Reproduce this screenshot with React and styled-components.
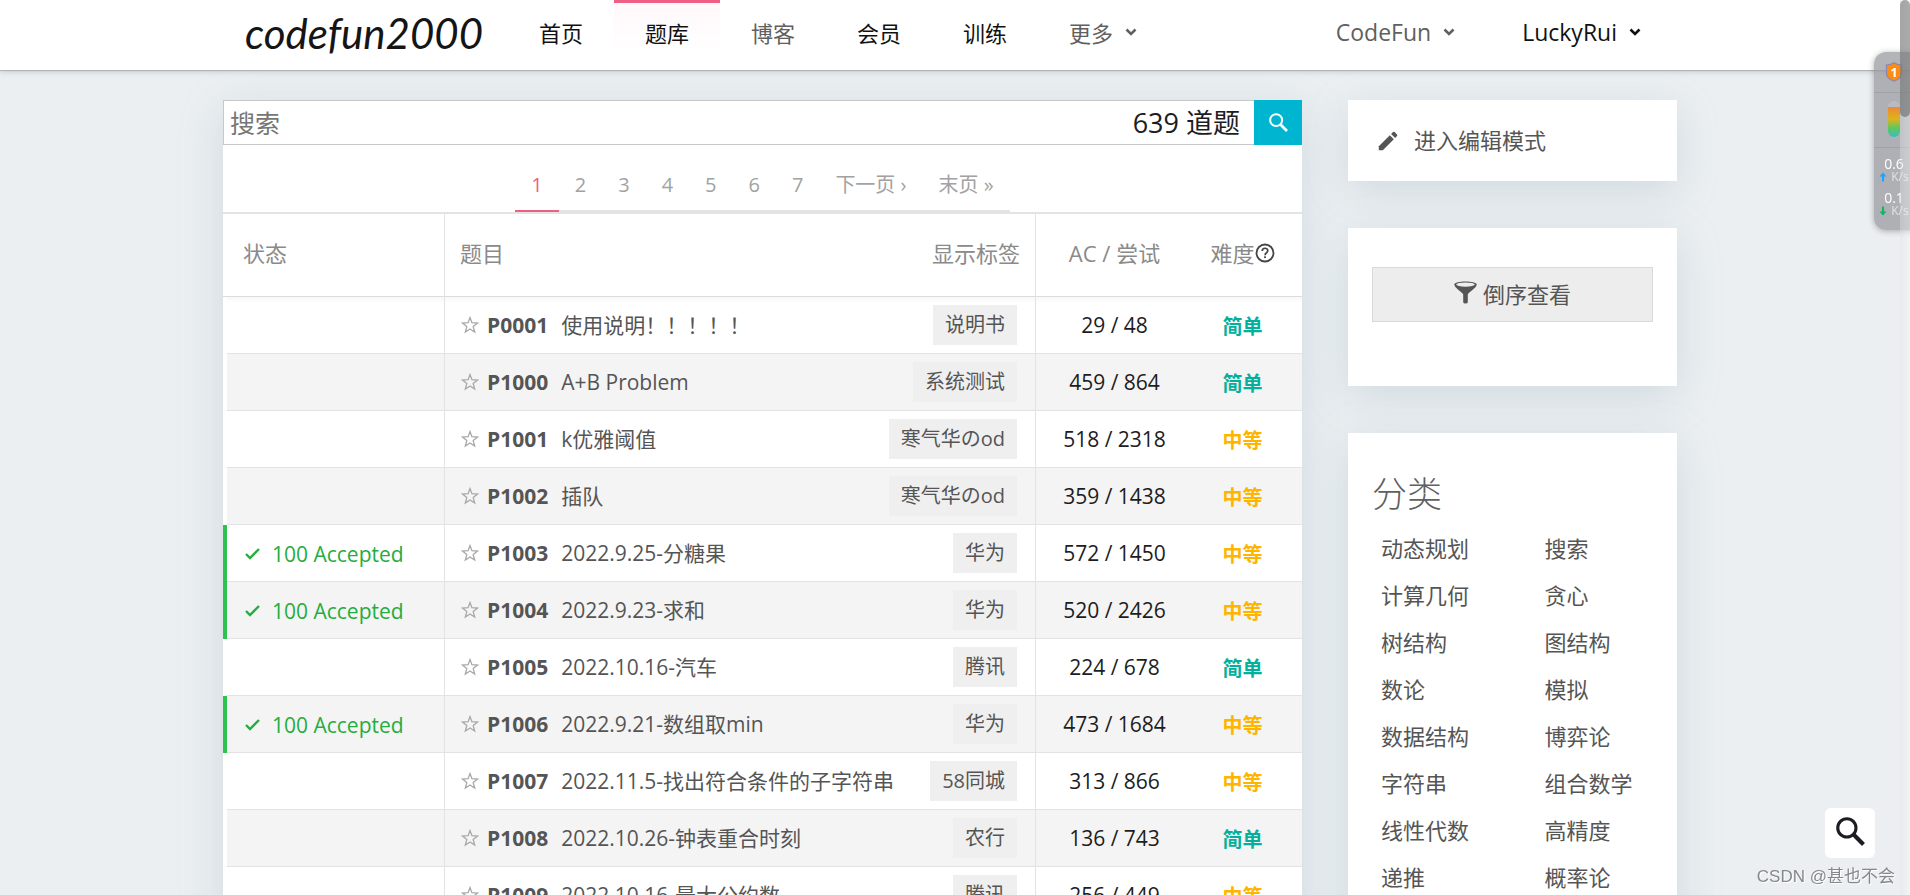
import React, { useState } from "react";
import styled, { createGlobalStyle } from "styled-components";

const problems = [
  { id: "P0001", title: "使用说明！！！！！", tag: "说明书", ac: 29, tries: 48, level: "简单" },
  { id: "P1000", title: "A+B Problem", tag: "系统测试", ac: 459, tries: 864, level: "简单" },
  { id: "P1001", title: "k优雅阈值", tag: "寒气华のod", ac: 518, tries: 2318, level: "中等" },
  { id: "P1002", title: "插队", tag: "寒气华のod", ac: 359, tries: 1438, level: "中等" },
  { id: "P1003", title: "2022.9.25-分糖果", tag: "华为", ac: 572, tries: 1450, level: "中等", accepted: true },
  { id: "P1004", title: "2022.9.23-求和", tag: "华为", ac: 520, tries: 2426, level: "中等", accepted: true },
  { id: "P1005", title: "2022.10.16-汽车", tag: "腾讯", ac: 224, tries: 678, level: "简单" },
  { id: "P1006", title: "2022.9.21-数组取min", tag: "华为", ac: 473, tries: 1684, level: "中等", accepted: true },
  { id: "P1007", title: "2022.11.5-找出符合条件的子字符串", tag: "58同城", ac: 313, tries: 866, level: "中等" },
  { id: "P1008", title: "2022.10.26-钟表重合时刻", tag: "农行", ac: 136, tries: 743, level: "简单" },
  { id: "P1009", title: "2022.10.16-最大公约数", tag: "腾讯", ac: 256, tries: 449, level: "中等" },
];

const categories = [
  "动态规划", "搜索",
  "计算几何", "贪心",
  "树结构", "图结构",
  "数论", "模拟",
  "数据结构", "博弈论",
  "字符串", "组合数学",
  "线性代数", "高精度",
  "递推", "概率论",
];

const navItems = [
  { name: "首页" },
  { name: "题库", active: true },
  { name: "博客", muted: true },
  { name: "会员" },
  { name: "训练" },
];

const ChevronIcon = () => (
  <svg width="12" height="8" viewBox="0 0 12 8" aria-hidden="true">
    <path d="M1.5 1.5 L6 6 L10.5 1.5" fill="none" stroke="currentColor" strokeWidth="2.6" />
  </svg>
);

const SearchIcon = ({ size }) => (
  <svg width={size} height={size} viewBox="0 0 28 28" aria-hidden="true">
    <circle cx="10.5" cy="10.5" r="8.8" fill="none" stroke="currentColor" strokeWidth="3" />
    <path d="M16.5 16.5 L26.5 26.5" stroke="currentColor" strokeWidth="4" />
  </svg>
);

const StarIcon = () => (
  <svg width="18" height="18" viewBox="0 0 18 18" aria-hidden="true">
    <path
      d="M9 1.6 L10.9 6.7 L16.6 7 L12.2 10.6 L13.7 16 L9 13 L4.3 16 L5.8 10.6 L1.4 7 L7.1 6.7 Z"
      fill="none"
      stroke="currentColor"
      strokeWidth="1.3"
    />
  </svg>
);

const CheckIcon = () => (
  <svg width="15" height="12" viewBox="0 0 15 12" aria-hidden="true">
    <path d="M1 6 L5 10 L14 1" fill="none" stroke="currentColor" strokeWidth="2.4" />
  </svg>
);

const HelpIcon = () => (
  <svg width="20" height="20" viewBox="0 0 20 20" aria-hidden="true">
    <circle cx="10" cy="10" r="8.5" fill="none" stroke="currentColor" strokeWidth="1.8" />
    <path
      d="M7.2 8 C7.2 4.4 12.8 4.4 12.8 7.8 C12.8 9.8 10 9.8 10 12.2"
      fill="none"
      stroke="currentColor"
      strokeWidth="1.7"
    />
    <rect x="9.1" y="13.3" width="1.8" height="1.8" fill="currentColor" />
  </svg>
);

const PencilIcon = () => (
  <svg width="20" height="20" viewBox="0 0 20 20" fill="currentColor" aria-hidden="true">
    <path d="M0.8 15.2 L11.8 4.2 L15.8 8.2 L4.8 19.2 H0.8 Z" />
    <path d="M13.1 2.9 L15 1 Q15.8 0.4 16.6 1 L19 3.4 Q19.6 4.2 19 5 L17.1 6.9 Z" />
  </svg>
);

const FunnelIcon = () => (
  <svg width="23" height="23" viewBox="0 0 23 23" aria-hidden="true">
    <path d="M0.3 3.6 C0.3 7 8.6 11.4 9.2 13.4 V21 Q9.2 22.6 11.5 22.6 Q13.8 22.6 13.8 21 V13.4 C14.4 11.4 22.7 7 22.7 3.6 C22.7 -0.5 0.3 -0.5 0.3 3.6 Z" fill="currentColor" />
    <ellipse cx="11.5" cy="3.6" rx="9.3" ry="2.1" fill="#ededed" />
  </svg>
);

const ShieldIcon = () => (
  <svg width="18" height="20" viewBox="0 0 18 20" aria-hidden="true">
    <path
      d="M9 0.8 Q12 3 16.6 3 V11 Q16.6 16.4 9 19.2 Q1.4 16.4 1.4 11 V3 Q6 3 9 0.8 Z"
      fill="#ff8c12"
      stroke="#8b86b4"
      strokeWidth="1.2"
    />
    <text x="9" y="14.5" textAnchor="middle" fontSize="13" fontWeight="bold" fill="#fff">1</text>
  </svg>
);

const ArrowIcon = ({ down }) => (
  <svg width="8" height="10" viewBox="0 0 8 10" aria-hidden="true">
    <path
      d={down ? "M4 9.5 L0.5 5.5 H3 V0.5 H5 V5.5 H7.5 Z" : "M4 0.5 L7.5 4.5 H5 V9.5 H3 V4.5 H0.5 Z"}
      fill={down ? "#08b95d" : "#18a4ff"}
    />
  </svg>
);

export default function App() {
  const [keyword, setKeyword] = useState("");
  const [starred, setStarred] = useState([]);

  const toggleStar = (id) => {
    setStarred((prev) => (prev.includes(id) ? prev.filter((item) => item !== id) : [...prev, id]));
  };

  const renderRows = () => {
    return problems.map((problem) => (
      <Row key={problem.id}>
        <StatusCell $accepted={problem.accepted}>
          {problem.accepted && (
            <StatusLink href="#record">
              <CheckIcon />
              100 Accepted
            </StatusLink>
          )}
        </StatusCell>
        <ProblemCell>
          <ProblemContent>
            <StarButton
              aria-label={`收藏 ${problem.id}`}
              $active={starred.includes(problem.id)}
              onClick={() => toggleStar(problem.id)}
            >
              <StarIcon />
            </StarButton>
            <ProblemLink href={`#${problem.id}`}>
              <ProblemId>{problem.id}</ProblemId>
              {problem.title}
            </ProblemLink>
            <Tag href="#tag">{problem.tag}</Tag>
          </ProblemContent>
        </ProblemCell>
        <CountCell>
          {problem.ac} / {problem.tries}
        </CountCell>
        <LevelCell $level={problem.level}>{problem.level}</LevelCell>
      </Row>
    ));
  };

  return (
    <Page>
      <GlobalStyle />
      <Nav>
        <NavInner>
          <Logo href="#home">codefun2000</Logo>
          {navItems.map((item) => (
            <NavLink key={item.name} href="#nav" $active={item.active} $muted={item.muted}>
              {item.name}
            </NavLink>
          ))}
          <NavMenu $muted>
            更多
            <ChevronIcon />
          </NavMenu>
          <UserMenus>
            <UserMenu $muted>
              CodeFun
              <ChevronIcon />
            </UserMenu>
            <UserMenu>
              LuckyRui
              <ChevronIcon />
            </UserMenu>
          </UserMenus>
        </NavInner>
      </Nav>

      <Container>
        <MainCard>
          <SearchForm onSubmit={(event) => event.preventDefault()}>
            <SearchField>
              <SearchInput
                aria-label="搜索"
                placeholder="搜索"
                value={keyword}
                onChange={(event) => setKeyword(event.target.value)}
              />
              <ProblemCount>639 道题</ProblemCount>
            </SearchField>
            <SearchButton aria-label="搜索题目">
              <SearchIcon size={19} />
            </SearchButton>
          </SearchForm>
          <Pager>
            <PageList>
              {[1, 2, 3, 4, 5, 6, 7].map((page) => (
                <PageLink key={page} href="#page" $active={page === 1}>
                  {page}
                </PageLink>
              ))}
              <PageLink href="#page">下一页 ›</PageLink>
              <PageLink href="#page">末页 »</PageLink>
            </PageList>
          </Pager>
          <Table>
            <colgroup>
              <StatusCol />
              <col />
              <CountCol />
              <LevelCol />
            </colgroup>
            <thead>
              <tr>
                <StatusHead>状态</StatusHead>
                <ProblemHead>
                  <HeadContent>
                    题目
                    <TagToggle>显示标签</TagToggle>
                  </HeadContent>
                </ProblemHead>
                <CountHead>AC / 尝试</CountHead>
                <LevelHead>
                  <LevelContent>
                    难度
                    <HelpLink href="#help" aria-label="难度说明">
                      <HelpIcon />
                    </HelpLink>
                  </LevelContent>
                </LevelHead>
              </tr>
            </thead>
            <tbody>{renderRows()}</tbody>
          </Table>
        </MainCard>

        <Sidebar>
          <EditCard>
            <EditLink href="#edit">
              <PencilIcon />
              进入编辑模式
            </EditLink>
          </EditCard>
          <SortCard>
            <SortButton>
              <FunnelIcon />
              倒序查看
            </SortButton>
          </SortCard>
          <CategoryCard>
            <CategoryTitle>分类</CategoryTitle>
            <CategoryList>
              {categories.map((name) => (
                <CategoryLink key={name} href="#category">
                  {name}
                </CategoryLink>
              ))}
            </CategoryList>
          </CategoryCard>
        </Sidebar>
      </Container>

      <FloatingSearch aria-label="快速搜索">
        <SearchIcon size={29} />
      </FloatingSearch>
      <Watermark>CSDN @甚也不会</Watermark>
      <Monitor>
        <ShieldIcon />
        <Divider />
        <Gauge />
        <Divider />
        <Speed>0.6</Speed>
        <SpeedUnit>
          <ArrowIcon />
          K/s
        </SpeedUnit>
        <Speed>0.1</Speed>
        <SpeedUnit>
          <ArrowIcon down />
          K/s
        </SpeedUnit>
      </Monitor>
      <ScrollTrack>
        <ScrollThumb />
      </ScrollTrack>
    </Page>
  );
}

const GlobalStyle = createGlobalStyle`
  * {
    box-sizing: border-box;
  }
  html {
    scrollbar-width: none;
  }
  body {
    margin: 0;
    background: #ebeff2;
    color: #1c1d22;
    font-family: "Open Sans", "Noto Sans CJK SC", sans-serif;
    font-size: 20px;
  }
  a {
    color: inherit;
    text-decoration: none;
  }
  button, input {
    font-family: inherit;
    border: none;
    background: none;
    padding: 0;
    color: inherit;
  }
  button {
    cursor: pointer;
  }
  svg {
    flex-shrink: 0;
  }
`;
const Page = styled.div`
  min-height: 100vh;
  padding-right: 10px;
`;
const Nav = styled.nav`
  position: relative;
  height: 70px;
  margin-right: -10px;
  padding-right: 10px;
  background: #fff;
  box-shadow: 0 1px 1px rgba(0, 0, 0, 0.16), 0 2px 6px rgba(0, 0, 0, 0.14);
`;
const NavInner = styled.div`
  display: flex;
  max-width: 1454px;
  height: 100%;
  margin: 0 auto;
`;
const Logo = styled.a`
  width: 285px;
  padding-left: 22px;
  color: #151515;
  font-family: Lato, sans-serif;
  font-size: 42px;
  font-style: italic;
  line-height: 66px;
`;
const NavLink = styled.a`
  padding: 0 31px;
  border-top: 3px solid ${(props) => (props.$active ? "#ef5f85" : "transparent")};
  background: ${(props) => (props.$active ? "linear-gradient(#fff8fa, #fff 50px)" : "none")};
  color: ${(props) => (props.$muted ? "#606060" : "#111")};
  font-size: 22px;
  line-height: 60px;
  white-space: nowrap;
`;
const NavMenu = styled.button`
  display: flex;
  align-items: center;
  gap: 12px;
  padding: 0 31px;
  padding-bottom: 6px;
  color: ${(props) => (props.$muted ? "#606060" : "#111")};
  font-size: 22px;
  white-space: nowrap;
`;
const UserMenu = styled(NavMenu)`
  padding-right: 36px;
  font-size: 23px;
`;
const UserMenus = styled.div`
  display: flex;
  margin-left: auto;
`;
const Container = styled.div`
  display: grid;
  grid-template-columns: minmax(0, 1079fr) minmax(0, 329fr);
  gap: 46px;
  align-items: start;
  max-width: 1454px;
  margin: 30px auto 0;
`;
const Card = styled.section`
  background: #fff;
  box-shadow: 0 10px 40px rgba(140, 165, 175, 0.28);
`;
const MainCard = styled(Card)`
  min-width: 0;
`;
const SearchForm = styled.form`
  display: flex;
  height: 45px;
`;
const SearchField = styled.div`
  display: flex;
  flex: 1;
  align-items: center;
  border: 1px solid #c8c8c8;
  border-right: none;
  padding: 0 14px 0 6px;
`;
const SearchInput = styled.input`
  flex: 1;
  min-width: 0;
  height: 100%;
  outline: none;
  font-size: 25px;
  &::placeholder {
    color: #767676;
  }
`;
const ProblemCount = styled.span`
  font-size: 27px;
  line-height: 40px;
`;
const SearchButton = styled.button`
  display: flex;
  align-items: center;
  justify-content: center;
  width: 48px;
  background: #00b5d0;
  color: #fff;
`;
const Pager = styled.div`
  display: flex;
  justify-content: center;
  height: 69px;
  border-bottom: 2px solid #e3e3e3;
`;
const PageList = styled.div`
  display: flex;
`;
const PageLink = styled.a`
  padding: 20px 16px 0;
  border-bottom: 2px solid ${(props) => (props.$active ? "#ee5f85" : "#e3e3e3")};
  color: ${(props) => (props.$active ? "#ee5f85" : "#a2a2a2")};
  line-height: 40px;
  white-space: nowrap;
`;
const Table = styled.table`
  width: 100%;
  table-layout: fixed;
  border-collapse: separate;
  border-spacing: 0;
`;
const StatusCol = styled.col`
  width: 222px;
`;
const CountCol = styled.col`
  width: 157px;
`;
const LevelCol = styled.col`
  width: 109px;
`;
const HeadCell = styled.th`
  height: 83px;
  padding: 0 15px 4px;
  border-bottom: 1px solid #dcdcdc;
  color: #8a8a8a;
  font-size: 22px;
  font-weight: normal;
  line-height: 30px;
  text-align: left;
  white-space: nowrap;
`;
const StatusHead = styled(HeadCell)`
  padding-left: 20px;
  border-right: 1px solid #e3e3e3;
`;
const ProblemHead = styled(HeadCell)`
  border-right: 1px solid #e3e3e3;
`;
const CountHead = styled(HeadCell)`
  text-align: center;
`;
const LevelHead = styled(HeadCell)`
  padding: 0 18px 4px 8px;
`;
const HeadContent = styled.div`
  display: flex;
  justify-content: space-between;
`;
const TagToggle = styled.button`
  font-size: 22px;
  line-height: 30px;
`;
const LevelContent = styled.div`
  display: flex;
  justify-content: center;
  align-items: center;
`;
const HelpLink = styled.a`
  display: flex;
  color: #444;
`;
const Row = styled.tr`
  background: #fff;
  &:nth-child(even) {
    background: #f4f4f4;
  }
  &:first-child td {
    background: linear-gradient(#f8f8f8, #fff 6px);
  }
`;
const Cell = styled.td`
  height: 57px;
  padding: 0 16px;
  border-bottom: 1px solid #e3e3e3;
`;
const StatusCell = styled(Cell)`
  border-left: 4px solid ${(props) => (props.$accepted ? "#2dc44e" : "#fff")};
  border-right: 1px solid #e3e3e3;
  border-bottom: none;
  box-shadow: inset 0 -1px #e3e3e3;
  padding-left: 18px;
`;
const StatusLink = styled.a`
  display: flex;
  align-items: center;
  gap: 12px;
  color: #25ad40;
  font-size: 21px;
  white-space: nowrap;
`;
const ProblemCell = styled(Cell)`
  border-right: 1px solid #e3e3e3;
`;
const ProblemContent = styled.div`
  display: flex;
  align-items: center;
`;
const StarButton = styled.button`
  display: flex;
  margin-right: 8px;
  color: ${(props) => (props.$active ? "#ffb400" : "#a8a8a8")};
`;
const ProblemLink = styled.a`
  color: #555;
  font-size: 21px;
  line-height: 40px;
  white-space: nowrap;
`;
const ProblemId = styled.b`
  margin-right: 13px;
`;
const Tag = styled.a`
  margin-left: auto;
  margin-right: 2px;
  padding: 0 12px;
  background: #efefef;
  color: #555;
  line-height: 40px;
  white-space: nowrap;
`;
const CountCell = styled(Cell)`
  font-size: 21px;
  text-align: center;
  white-space: nowrap;
`;
const LevelCell = styled(Cell)`
  padding: 0 18px 0 8px;
  color: ${(props) => (props.$level === "简单" ? "#04b09b" : "#ffb400")};
  font-weight: bold;
  text-align: center;
`;
const Sidebar = styled.aside`
  display: flex;
  flex-direction: column;
  gap: 47px;
`;
const EditCard = styled(Card)`
  padding: 23px 30px;
`;
const EditLink = styled.a`
  display: flex;
  align-items: center;
  gap: 16px;
  color: #555;
  font-size: 22px;
  line-height: 35px;
`;
const SortCard = styled(Card)`
  padding: 39px 24px 64px;
`;
const SortButton = styled.button`
  display: flex;
  align-items: center;
  justify-content: center;
  gap: 6px;
  width: 100%;
  height: 55px;
  padding-bottom: 4px;
  border: 1px solid #d9d9d9;
  background: #ededed;
  color: #555;
  font-size: 22px;
`;
const CategoryCard = styled(Card)`
  padding: 36px 24px 40px;
`;
const CategoryTitle = styled.h2`
  margin: 0;
  color: #606060;
  font-size: 35px;
  font-weight: 300;
  line-height: 50px;
`;
const CategoryList = styled.div`
  display: grid;
  grid-template-columns: 1fr 1fr;
  margin-top: 6px;
  margin-right: -46px;
`;
const CategoryLink = styled.a`
  padding-left: 9px;
  color: #555;
  font-size: 22px;
  line-height: 47px;
`;
const FloatingSearch = styled.button`
  position: fixed;
  right: 35px;
  bottom: 37px;
  display: flex;
  align-items: center;
  justify-content: center;
  width: 50px;
  height: 50px;
  padding-bottom: 4px;
  border-radius: 6px;
  background: #fff;
  color: #1c1d22;
`;
const Watermark = styled.span`
  position: fixed;
  right: 15px;
  bottom: 5px;
  color: #85888b;
  font-family: "Liberation Sans", "Noto Sans CJK SC", sans-serif;
  font-size: 17px;
  line-height: 26px;
  text-shadow: 1px 1px #fff;
`;
const Monitor = styled.aside`
  position: fixed;
  top: 52px;
  right: -4px;
  display: flex;
  flex-direction: column;
  align-items: center;
  width: 40px;
  height: 178px;
  padding-top: 10px;
  border-radius: 12px 0 0 12px;
  background: rgba(150, 151, 157, 0.72);
  box-shadow: 0 1px 6px rgba(0, 0, 0, 0.3);
  color: #fff;
`;
const Divider = styled.hr`
  width: 100%;
  margin: 10px 0 8px;
  border: none;
  border-top: 1px solid #9fa2a6;
`;
const Gauge = styled.div`
  width: 12px;
  height: 36px;
  border-radius: 6px;
  background: linear-gradient(#b9bbc0 6px, #ee8735 6px, #dcb51c 18px, #5fc75d 27px, #38bfc0);
`;
const Speed = styled.span`
  font-size: 14px;
  line-height: 16px;
`;
const SpeedUnit = styled.span`
  display: flex;
  align-items: center;
  gap: 4px;
  margin-bottom: 8px;
  color: #e0e1e3;
  font-size: 12px;
  line-height: 10px;
`;
const ScrollTrack = styled.div`
  position: fixed;
  top: 0;
  right: 0;
  bottom: 0;
  width: 10px;
  background: linear-gradient(90deg, rgba(225, 225, 225, 0.4), rgba(250, 250, 250, 0.4));
`;
const ScrollThumb = styled.div`
  height: 117px;
  border-radius: 5px;
  background: rgba(70, 70, 70, 0.45);
`;
